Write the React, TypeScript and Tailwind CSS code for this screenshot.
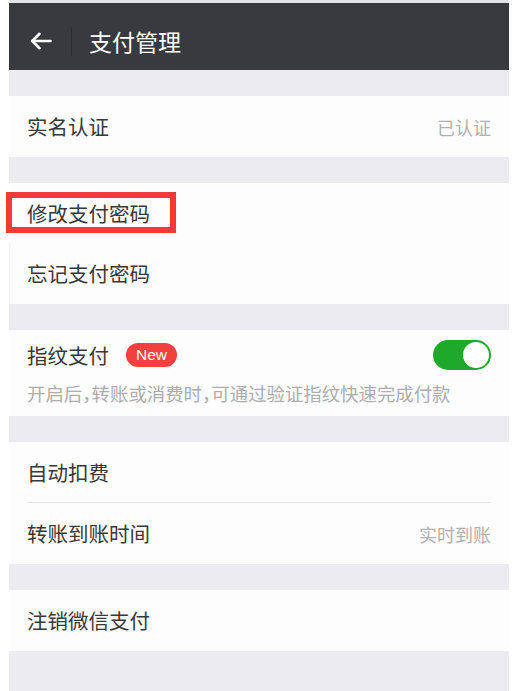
import React from "react";

const font = { fontFamily: '"Noto Sans CJK SC", "Noto Sans", sans-serif' };

const Gap = ({ h = "h-[26px]" }: { h?: string }) => <div className={`${h} bg-[#ecebf0]`} />;

type RowProps = { label: string; value?: string; h?: string; extra?: string };

const Row = ({ label, value, h = "h-[61px]", extra = "" }: RowProps) => (
    <div className={`${h} ${extra} flex items-center justify-between bg-[#fdfdfd] px-[18px]`}>
        <span className="text-[20.5px] text-[#383838] leading-none">{label}</span>
        {value && <span className="text-[18px] text-[#b0b0b0] leading-none">{value}</span>}
    </div>
);

const Toggle = () => (
    <div className="flex h-[30px] w-[58px] items-center justify-end rounded-full bg-[#1fa92a] px-[2px]">
        <div className="h-[26px] w-[26px] rounded-full bg-white" />
    </div>
);

export default function App() {
    return (
        <div className="relative h-[691px] w-[513px] overflow-hidden bg-white pl-[9px] pr-[4px]" style={font}>
            <div className="flex h-full flex-col bg-[#ecebf0]">
                {/* Top bar */}
                <div className="flex h-[70px] items-center border-t-[3px] border-[#e3e3e5] bg-[#393a3f] pl-[21px] pt-[9px]">
                    <svg width="22" height="18" viewBox="0 0 22 18" fill="none" stroke="white" strokeWidth="2.6" strokeLinecap="round" strokeLinejoin="round">
                        <path d="M20.5 9H2.5" />
                        <path d="M9.5 1.8L2.2 9l7.3 7.2" />
                    </svg>
                    <div className="ml-[19px] h-[29px] w-px bg-[#2e2f33]" />
                    <span className="ml-[17px] text-[23px] text-white leading-none">支付管理</span>
                </div>

                <Gap />
                <Row label="实名认证" value="已认证" />
                <Gap />
                <Row label="修改支付密码" h="h-[60px]" />
                <Row label="忘记支付密码" extra="shadow-[inset_2px_0_2px_-1px_#f1f1f3]" />
                <Gap h="h-[26px]" />

                {/* Fingerprint payment */}
                <div className="flex h-[86px] flex-col bg-[#fdfdfd] px-[18px] pt-[10px]">
                    <div className="flex h-[30px] items-center justify-between">
                        <div className="flex items-center">
                            <span className="text-[20.5px] text-[#383838] leading-none">指纹支付</span>
                            <span
                                className="ml-[17px] flex h-[24px] w-[51px] items-center justify-center rounded-full bg-[#f1403e] text-[15.5px] text-white leading-none"
                                style={{ fontFamily: '"Liberation Sans", Arial, sans-serif' }}
                            >
                                New
                            </span>
                        </div>
                        <Toggle />
                    </div>
                    <p className="mt-[11px] text-[18.4px] leading-[24px] text-[#acacac] whitespace-nowrap">
                        开启后<span className="tracking-[-9px]">，</span>转账或消费时<span className="tracking-[-9px]">，</span>可通过验证指纹快速完成付款
                    </p>
                </div>

                <Gap h="h-[26px]" />
                <div className="bg-[#fdfdfd]">
                    <Row label="自动扣费" h="h-[60px]" />
                    <div className="mx-[18px] h-px bg-[#e3e3e5]" />
                    <Row label="转账到账时间" value="实时到账" />
                </div>
                <Gap h="h-[26px]" />
                <Row label="注销微信支付" />
            </div>

            {/* annotation box */}
            <div className="absolute left-[6px] top-[192px] h-[41px] w-[170px] border-[6px] border-[#f4393a]" />
        </div>
    );
}
